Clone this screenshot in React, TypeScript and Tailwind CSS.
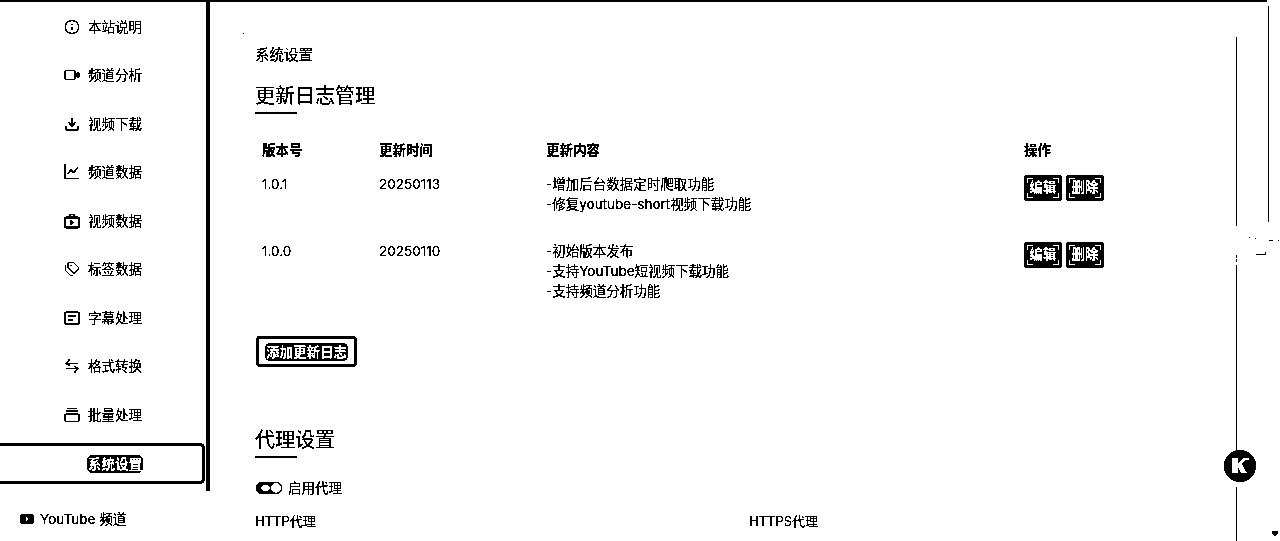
import React from 'react';
import { Info, Download, Tags } from 'lucide-react';

const svgProps = {
  width: 16,
  height: 16,
  viewBox: '0 0 16 16',
  fill: 'none',
  stroke: 'currentColor',
  strokeWidth: 1.25,
};

const navItems = [
  { label: '本站说明', icon: <Info size={16} strokeWidth={1.75} /> },
  {
    label: '频道分析',
    icon: (
      <svg {...svgProps}>
        <rect x="0.75" y="3.500" width="10.500" height="9" rx="1.500" />
        <rect x="13" y="5.500" width="2" height="5" rx="1" />
      </svg>
    ),
  },
  { label: '视频下载', icon: <Download size={16} strokeWidth={1.75} /> },
  {
    label: '频道数据',
    icon: (
      <svg {...svgProps}>
        <path d="M1 0.500V14.500H15" />
        <path d="M3.500 10 7 6l2.500 2.500L14 3.500" />
      </svg>
    ),
  },
  {
    label: '视频数据',
    icon: (
      <svg {...svgProps} strokeWidth={2}>
        <rect x="1" y="4.500" width="14" height="10" rx="1.500" />
        <path d="M5 4 6 1.500h4L11 4" strokeWidth="1.500" />
        <path d="M6.500 7v5l4-2.500z" fill="currentColor" stroke="none" />
      </svg>
    ),
  },
  { label: '标签数据', icon: <Tags size={16} strokeWidth={1.5} /> },
  {
    label: '字幕处理',
    icon: (
      <svg {...svgProps}>
        <rect x="0.75" y="2" width="14.500" height="12" rx="1.500" />
        <path d="M4 6h8M4 10h5" />
      </svg>
    ),
  },
  {
    label: '格式转换',
    icon: (
      <svg {...svgProps}>
        <path d="M14 5.500H2M5.500 1.500 2 5.500l3.500 2" />
        <path d="M2 10.500h12M10.500 8.500 14 10.500l-3.500 4" />
      </svg>
    ),
  },
  {
    label: '批量处理',
    icon: (
      <svg {...svgProps}>
        <path d="M3 1.500h10M2 4h12" />
        <rect x="0.75" y="7" width="14.500" height="7.500" rx="1.500" />
      </svg>
    ),
  },
];

const logs = [
  { version: '1.0.1', date: '20250113', lines: ['-增加后台数据定时爬取功能', '-修复youtube-short视频下载功能'] },
  { version: '1.0.0', date: '20250110', lines: ['-初始版本发布', '-支持YouTube短视频下载功能', '-支持频道分析功能'] },
];

const SmallButton = ({ label }: { label: string }) => (
  <button className="relative w-[38px] h-[26px] rounded-[3px] bg-black text-white text-[13.5px] font-bold leading-none [text-shadow:0_0_1px_white]">
    {label}
    <svg className="absolute inset-0" width="38" height="26" viewBox="0 0 38 26" fill="none" stroke="white">
      <path d="M3.500 8V3.500H9M34.500 8V3.500H29M3.500 18v4.500H9M34.500 18v4.500H29" />
    </svg>
  </button>
);

const SectionTitle = ({ title }: { title: string }) => (
  <div>
    <h2 className="text-[20px] leading-[30px] text-black">{title}</h2>
    <div className="w-[42px] h-[2px] mt-[1px] bg-black" />
  </div>
);

export default function App() {
  return (
    <div className="relative flex flex-col w-[1280px] h-[541px] overflow-hidden bg-white text-black text-[13.5px] leading-[20px] font-['Inter','Noto_Sans_CJK_SC',sans-serif] [filter:grayscale(1)_brightness(0.72)_contrast(100)]">
      <div className="w-[1267px] h-[2px] shrink-0 bg-black" />
      <div className="flex flex-1">
        <aside className="w-[210px] shrink-0">
          <div className="h-[489px] w-[210px] border-r-[4px] border-black">
            <nav className="flex flex-col pt-[0.5px]">
              {navItems.map((item) => (
                <div key={item.label} className="h-[48.5px] flex items-center pl-[64px] gap-[8px]">
                  <span className="w-4 flex justify-center">{item.icon}</span>
                  <span>{item.label}</span>
                </div>
              ))}
              <div className="h-[41px] w-[205px] mt-[3.5px] border-[3px] border-l-0 border-black rounded-r-[5px] flex items-center pl-[87px] pt-[1px]">
                <span className="bg-black text-white font-bold rounded-[6px] px-[1px] leading-[18px] [text-shadow:0_0_1px_white]">系统设置</span>
              </div>
            </nav>
          </div>
          <div className="flex items-center gap-[6px] pl-[20px] pt-[18px]">
            <svg width="14" height="10" viewBox="0 0 14 10">
              <rect width="14" height="10" rx="2.500" fill="black" />
              <path d="M5.500 2.500v5l4-2.500z" fill="white" />
            </svg>
            <span>YouTube 频道</span>
          </div>
        </aside>
        <main className="flex-1 pl-[45px] pt-[43px]">
          <div className="text-[14.5px]">系统设置</div>
          <div className="mt-[16px]">
            <SectionTitle title="更新日志管理" />
          </div>
          <table className="mt-[26px] w-[880px] table-fixed text-left">
            <thead>
              <tr>
                <th className="w-[117px] pl-[7px] font-bold">版本号</th>
                <th className="w-[167px] pl-[7px] font-bold">更新时间</th>
                <th className="w-[478px] pl-[7px] font-bold">更新内容</th>
                <th className="pl-[7px] font-bold">操作</th>
              </tr>
            </thead>
            <tbody>
              {logs.map((log) => (
                <tr key={log.version} className="align-top">
                  <td className="pl-[7px] pt-[14px]">{log.version}</td>
                  <td className="pl-[7px] pt-[14px]">{log.date}</td>
                  <td className="pl-[7px] pt-[14px] pb-[13px]">
                    {log.lines.map((line) => (
                      <div key={line}>{line}</div>
                    ))}
                  </td>
                  <td className="pl-[7px] pt-[15px]">
                    <div className="flex gap-[4px]">
                      <SmallButton label="编辑" />
                      <SmallButton label="删除" />
                    </div>
                  </td>
                </tr>
              ))}
            </tbody>
          </table>
          <button className="mt-[22px] ml-[1px] w-[101px] h-[31px] border-[3px] border-black rounded-[4px] flex items-center justify-center">
            <span className="bg-black text-white font-bold rounded-[5px] leading-[18px] px-[1px] [text-shadow:0_0_1px_white]">添加更新日志</span>
          </button>
          <div className="mt-[58px]">
            <SectionTitle title="代理设置" />
          </div>
          <div className="flex items-center gap-[6px] mt-[20px]">
            <span className="relative w-[26px] h-[12px] ml-[1px] rounded-full bg-black">
              <span className="absolute left-[5px] top-[3px] w-[9px] h-[6px] rounded-full bg-white" />
              <span className="absolute right-[1px] top-[1px] w-[10px] h-[10px] rounded-full bg-white" />
            </span>
            <span>启用代理</span>
          </div>
          <div className="grid grid-cols-2 w-[988px] mt-[13px] text-[13px]">
            <div>HTTP代理</div>
            <div>HTTPS代理</div>
          </div>
        </main>
      </div>

      {/* stray scrollbar marks over the right edge */}
      <svg className="absolute inset-0 pointer-events-none" width="1280" height="541" viewBox="0 0 1280 541" fill="black">
        <path d="M243 33h1v1h-1zM1236 37h1v189h-1zM1268 6h1v216h-1zM1236 255h1v3h-1zM1236 259h1v3h-1zM1236 265h1v185h-1zM1236 487h1v54h-1z" />
        <path d="M1249 237h1v1h-1zM1255 238h1v1h-1zM1269 240h4v1h-4zM1278 240h1v1h-1zM1256 254h10v1h-10zM1265 252h1v3h-1z" />
        <path d="M1272 531h6v2l-3 3-3-3z" />
      </svg>

      <svg className="absolute left-[1224px] top-[450px]" width="32" height="32" viewBox="0 0 32 32">
        <circle cx="16" cy="16" r="16" fill="black" />
        <path d="M8 8h6v5.500L19 8h4l-5 6 5 9h-6l-3-5.500V23H8z" fill="white" />
        <circle cx="23.500" cy="9" r="1.500" fill="white" />
      </svg>
    </div>
  );
}
